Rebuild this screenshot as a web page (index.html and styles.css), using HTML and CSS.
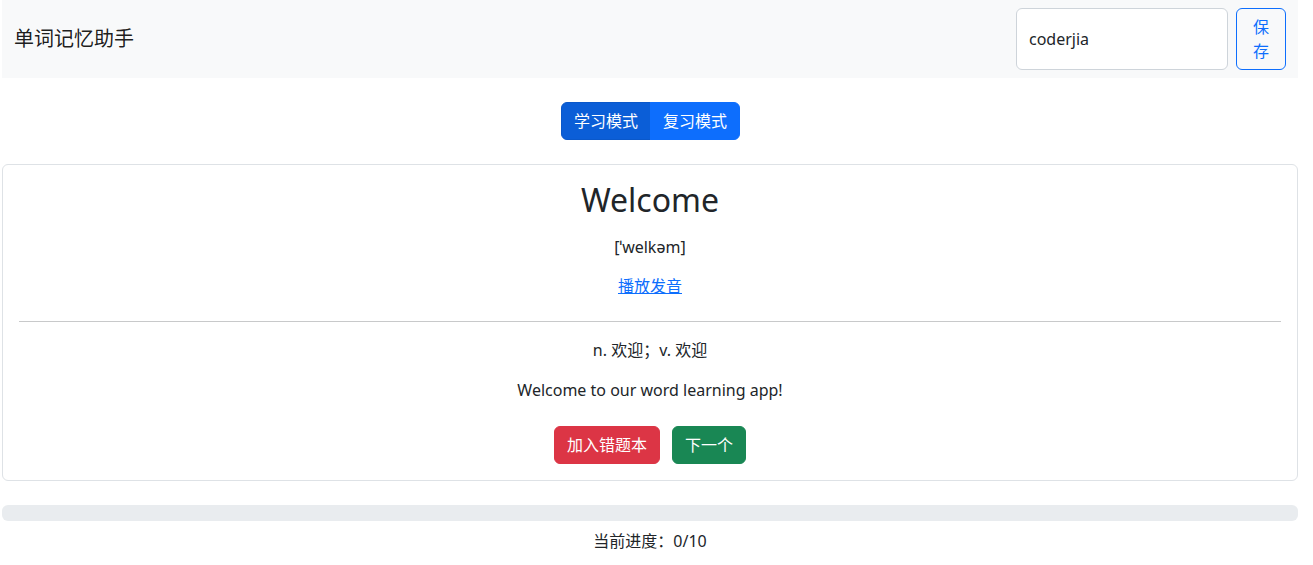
FILE: index.html
```html
<!DOCTYPE html>
<html lang="zh-CN">
<head>
<meta charset="utf-8">
<title>单词记忆助手</title>
<link rel="stylesheet" href="styles.css">
</head>
<body>
<div class="page">
  <nav class="navbar">
    <span class="brand">单词记忆助手</span>
    <form class="user-form">
      <input class="form-input" type="text" value="coderjia">
      <button class="btn btn-outline" type="button">保存</button>
    </form>
  </nav>

  <div class="mode-row">
    <div class="btn-group">
      <button class="btn btn-primary active" type="button">学习模式</button>
      <button class="btn btn-primary" type="button">复习模式</button>
    </div>
  </div>

  <div class="card">
    <div class="card-body">
      <h2 class="word">Welcome</h2>
      <p class="phonetic">[ˈwelkəm]</p>
      <div class="play-row"><a class="btn-link" href="#">播放发音</a></div>
      <hr class="divider">
      <p class="meaning">n. 欢迎；v. 欢迎</p>
      <p class="example">Welcome to our word learning app!</p>
      <div class="actions">
        <button class="btn btn-danger" type="button">加入错题本</button>
        <button class="btn btn-success" type="button">下一个</button>
      </div>
    </div>
  </div>

  <div class="progress"><div class="progress-bar" style="width:0%"></div></div>
  <p class="progress-text">当前进度：0/10</p>
</div>
</body>
</html>
```

FILE: styles.css
```css
* { box-sizing: border-box; }

body {
  margin: 0;
  font-family: "Segoe UI", "Noto Sans", "Noto Sans CJK SC", sans-serif;
  font-size: 16px;
  line-height: 1.5;
  color: #212529;
  background: #fff;
}

.page {
  width: 1296px;
  margin-left: 2px;
}

.navbar {
  display: flex;
  align-items: center;
  justify-content: space-between;
  background: #f8f9fa;
  padding: 8px 12px;
  height: 78px;
}

.brand {
  font-size: 20px;
  line-height: 30px;
  color: rgba(0, 0, 0, 0.9);
}

.user-form {
  display: flex;
  gap: 8px;
  margin: 0;
}

.form-input {
  width: 212px;
  height: 62px;
  padding: 6px 12px;
  font: inherit;
  color: #212529;
  border: 1px solid #ced4da;
  border-radius: 6px;
  background: #fff;
  outline: none;
}

.btn {
  display: inline-block;
  font: inherit;
  font-size: 16px;
  line-height: 24px;
  padding: 6px 12px;
  border: 1px solid transparent;
  border-radius: 6px;
  cursor: pointer;
  text-align: center;
}

.btn-outline {
  width: 50px;
  height: 62px;
  color: #0d6efd;
  border-color: #0d6efd;
  background: transparent;
}

.mode-row {
  display: flex;
  justify-content: center;
  margin-top: 24px;
  margin-bottom: 24px;
  padding-left: 1px;
}

.btn-group {
  display: flex;
}

.btn-group .btn:first-child {
  border-radius: 6px 0 0 6px;
}

.btn-group .btn:last-child {
  border-radius: 0 6px 6px 0;
  margin-left: -1px;
}

.btn-primary {
  color: #fff;
  background: #0d6efd;
  border-color: #0d6efd;
}

.btn-primary.active {
  background: #0b5ed7;
  border-color: #0a58ca;
}

.btn-danger {
  color: #fff;
  background: #dc3545;
  border-color: #dc3545;
}

.btn-success {
  color: #fff;
  background: #198754;
  border-color: #198754;
}

.card {
  border: 1px solid #dee2e6;
  border-radius: 6px;
  background: #fff;
}

.card-body {
  padding: 16px;
  text-align: center;
}

.word {
  margin: 0 0 16px;
  font-size: 32px;
  font-weight: 400;
  line-height: 1.2;
}

.phonetic {
  margin: 0 0 8px;
}

.play-row {
  padding: 7px 0;
}

.btn-link {
  color: #0d6efd;
  text-decoration: underline;
}

.divider {
  margin: 16px 0;
  border: 0;
  border-top: 1px solid #c8c9ca;
}

.meaning {
  margin: 0 0 16px;
}

.example {
  margin: 0 0 24px;
}

.actions {
  display: flex;
  justify-content: center;
  gap: 12px;
}

.progress {
  margin-top: 24px;
  height: 16px;
  background: #e9ecef;
  border-radius: 6px;
  overflow: hidden;
}

.progress-bar {
  height: 100%;
  background: #0d6efd;
}

.progress-text {
  margin: 8px 0 0;
  text-align: center;
}
```
